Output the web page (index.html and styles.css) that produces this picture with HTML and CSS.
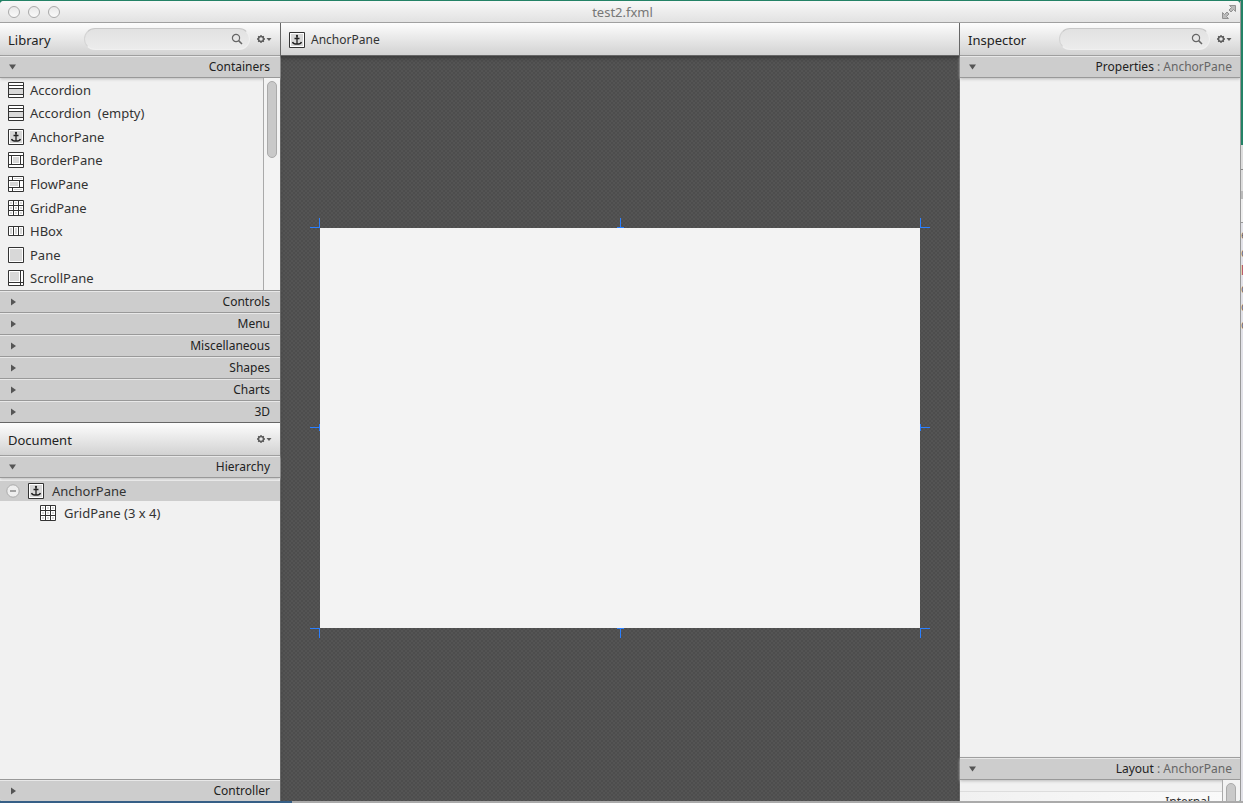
FILE: index.html
```
<!DOCTYPE html>
<html lang="en">
<head>
<meta charset="utf-8">
<title>test2.fxml</title>
<link rel="stylesheet" href="styles.css">
</head>
<body>
<svg class="defs" aria-hidden="true">
  <symbol id="accordion" viewBox="0 0 16 16"><path fill="#fff" d="M0 0h16v16H0z"/><path fill="#d8d8d8" d="M1 7h14v5H1z"/><path fill="none" stroke="#333" d="M.5 .5h15v15H.5zM0 3.500h16M0 6.500h16M0 12.500h16"/></symbol>
  <symbol id="anchor" viewBox="0 0 16 16"><path fill="#fff" stroke="#333" d="M.5 .5h15v15H.5z"/><path fill="#d8d8d8" d="M2 2h12v12H2z"/><path fill="none" stroke="#222" stroke-width="1.300" d="M8 4v8M5.500 6.500h5M3.500 10c.5 1.500 2 2.200 4.500 2.200s4-.7 4.500-2.200"/><circle cx="8" cy="3.800" r="1.100" fill="#222"/></symbol>
  <symbol id="border" viewBox="0 0 16 16"><path fill="#fff" d="M0 0h16v16H0z"/><path fill="#d8d8d8" d="M5 5h6v6H5z"/><path fill="none" stroke="#333" d="M.5 .5h15v15H.5zM0 3.500h16M0 12.500h16M3.500 3v10M12.500 3v10"/></symbol>
  <symbol id="flow" viewBox="0 0 16 16"><path fill="#fff" d="M0 0h16v16H0z"/><path fill="#d8d8d8" d="M2 6h8v4H2zM6 2h8v1H6zM6 13h8v1H6z"/><path fill="none" stroke="#333" d="M.5 .5h15v15H.5zM0 4.500h16M0 11.500h16M4.500 0v4M11.500 4v8M4.500 12v4"/></symbol>
  <symbol id="grid" viewBox="0 0 16 16"><path fill="#fff" d="M0 0h16v16H0z"/><path fill="#d8d8d8" d="M2 2h2v2H2zM7 2h2v2H7zM12 2h2v2h-2zM2 7h2v2H2zM7 7h2v2H7zM12 7h2v2h-2zM2 12h2v2H2zM7 12h2v2H7zM12 12h2v2h-2z"/><path fill="none" stroke="#333" d="M.5 .5h15v15H.5zM5.500 0v16M10.500 0v16M0 5.500h16M0 10.500h16"/></symbol>
  <symbol id="hbox" viewBox="0 0 16 16"><path fill="#fff" d="M0 3h16v10H0z"/><path fill="#d8d8d8" d="M2 5h2v6H2zM7 5h2v6H7zM12 5h2v6h-2z"/><path fill="none" stroke="#333" d="M.5 3.500h15v9H.5zM5.500 3v10M10.500 3v10"/></symbol>
  <symbol id="pane" viewBox="0 0 16 16"><path fill="#fff" stroke="#333" d="M.5 .5h15v15H.5z"/><path fill="#d8d8d8" d="M2 2h12v12H2z"/></symbol>
  <symbol id="scroll" viewBox="0 0 16 16"><path fill="#fff" d="M0 0h16v16H0z"/><path fill="#d8d8d8" d="M2 2h9v9H2z"/><path fill="none" stroke="#333" d="M.5 .5h15v15H.5zM12.500 0v16M0 12.500h16"/></symbol>
  <symbol id="search" viewBox="0 0 12 12"><circle cx="5" cy="5" r="3.600" fill="none" stroke="#666" stroke-width="1.200"/><path stroke="#666" stroke-width="1.500" d="M7.600 7.600L11 11"/></symbol>
  <symbol id="gear" viewBox="0 0 16 10"><circle cx="5" cy="5" r="2.500" fill="none" stroke="#5c5c5c" stroke-width="1.500"/><path stroke="#5c5c5c" stroke-width="1.300" d="M5 1v1.500M5 7.500V9M1 5h1.500M7.500 5H9M2.200 2.200l1 1M6.800 6.800l1 1M2.200 7.800l1-1M6.800 3.200l1-1"/><path fill="#5c5c5c" d="M10.500 4h5L13 7z"/></symbol>
  <symbol id="down" viewBox="0 0 8 6"><path fill="#555" d="M0 .5h7L3.500 5.500z"/></symbol>
  <symbol id="right" viewBox="0 0 8 8"><path fill="#555" d="M2 .5v7L7 4z"/></symbol>
</svg>
<div class="desktop">
  <main class="window">
    <header class="titlebar">
      <div class="lights"><button aria-label="Close"></button><button aria-label="Minimize"></button><button aria-label="Zoom"></button></div>
      <h1>test2.fxml</h1>
      <button class="expand" aria-label="Full screen"><svg width="16" height="16" viewBox="0 0 16 16"><path fill="#bbb" stroke="#929292" d="M8.500 1.500h6v6l-2-2-2.500 2.500-2-2 2.500-2.500zM7.500 14.500h-6v-6l2 2L6 8l2 2-2.500 2.500z"/></svg></button>
    </header>
    <div class="workspace">
      <aside class="side">
        <header class="bar"><h2>Library</h2><label class="search"><input type="text" aria-label="Search library"><svg width="12" height="12"><use href="#search"/></svg></label><button class="gear" aria-label="Library options"><svg width="16" height="10"><use href="#gear"/></svg></button></header>
        <button class="section open"><svg width="8" height="6"><use href="#down"/></svg><span>Containers</span></button>
        <div class="library">
          <ul class="items">
            <li><svg width="16" height="16"><use href="#accordion"/></svg>Accordion</li>
            <li><svg width="16" height="16"><use href="#accordion"/></svg>Accordion&nbsp; (empty)</li>
            <li><svg width="16" height="16"><use href="#anchor"/></svg>AnchorPane</li>
            <li><svg width="16" height="16"><use href="#border"/></svg>BorderPane</li>
            <li><svg width="16" height="16"><use href="#flow"/></svg>FlowPane</li>
            <li><svg width="16" height="16"><use href="#grid"/></svg>GridPane</li>
            <li><svg width="16" height="16"><use href="#hbox"/></svg>HBox</li>
            <li><svg width="16" height="16"><use href="#pane"/></svg>Pane</li>
            <li><svg width="16" height="16"><use href="#scroll"/></svg>ScrollPane</li>
          </ul>
          <div class="track"><div class="thumb"></div></div>
        </div>
        <button class="section"><svg width="8" height="8"><use href="#right"/></svg><span>Controls</span></button>
        <button class="section"><svg width="8" height="8"><use href="#right"/></svg><span>Menu</span></button>
        <button class="section"><svg width="8" height="8"><use href="#right"/></svg><span>Miscellaneous</span></button>
        <button class="section"><svg width="8" height="8"><use href="#right"/></svg><span>Shapes</span></button>
        <button class="section"><svg width="8" height="8"><use href="#right"/></svg><span>Charts</span></button>
        <button class="section last"><svg width="8" height="8"><use href="#right"/></svg><span>3D</span></button>
        <header class="bar"><h2>Document</h2><button class="gear" aria-label="Document options"><svg width="16" height="10"><use href="#gear"/></svg></button></header>
        <button class="section open"><svg width="8" height="6"><use href="#down"/></svg><span>Hierarchy</span></button>
        <ul class="tree">
          <li class="selected"><button class="collapse" aria-label="Collapse"><svg width="14" height="14" viewBox="0 0 14 14"><circle cx="7" cy="7" r="6.200" fill="#eee" stroke="#aaa"/><path stroke="#888" stroke-width="1.500" d="M4 7h6"/></svg></button><svg width="16" height="16"><use href="#anchor"/></svg>AnchorPane</li>
          <li class="child"><svg width="16" height="16"><use href="#grid"/></svg>GridPane (3 x 4)</li>
        </ul>
        <button class="section foot"><svg width="8" height="8"><use href="#right"/></svg><span>Controller</span></button>
      </aside>
      <section class="editor">
        <nav class="bar path"><svg width="16" height="16"><use href="#anchor"/></svg><a href="#root">AnchorPane</a></nav>
        <div class="canvas">
          <div class="artboard" id="root">
            <svg class="handles" width="620" height="420" viewBox="0 0 620 420"><path fill="none" stroke="#2a7fff" d="M0 9.500h10M9.500 0v10M310.500 0v10M307 9.500h7M610.500 0v10M610 9.500h10M0 209.500h10M9.500 206v7M610 209.500h10M610.500 206v7M0 410.500h10M9.500 410v10M310.500 410v10M307 410.500h7M610 410.500h10M610.500 410v10"/></svg>
          </div>
        </div>
      </section>
      <aside class="side inspector">
        <header class="bar"><h2>Inspector</h2><label class="search"><input type="text" aria-label="Search inspector"><svg width="12" height="12"><use href="#search"/></svg></label><button class="gear" aria-label="Inspector options"><svg width="16" height="10"><use href="#gear"/></svg></button></header>
        <button class="section open"><svg width="8" height="6"><use href="#down"/></svg><span>Properties <i>: AnchorPane</i></span></button>
        <div class="properties"></div>
        <button class="section open"><svg width="8" height="6"><use href="#down"/></svg><span>Layout <i>: AnchorPane</i></span></button>
        <div class="layout"><div class="fields"><div class="group">Internal</div></div><div class="track"><div class="thumb"></div></div></div>
      </aside>
    </div>
  </main>
  <div class="behind"><span>e</span><span>c</span><span class="hot">l</span><span>c</span><span>c</span><span>c</span></div>
</div>
</body>
</html>
```
FILE: styles.css
```
* { box-sizing: border-box; }
body { margin: 0; font-family: "Noto Sans", sans-serif; font-size: 13px; color: #333; }
h1, h2, ul { margin: 0; padding: 0; font-weight: 400; list-style: none; }
button { border: 0; padding: 0; background: none; font: inherit; color: inherit; }
svg { display: block; flex: none; }
.defs { position: absolute; width: 0; height: 0; }
.desktop {
  display: flex; height: 100vh; padding: 1px 0 2px; overflow: hidden;
  background:
    linear-gradient(90deg, #365f86 0 292px, #aaa 292px) bottom / 100% 2px no-repeat,
    #238266;
}
.window { flex: 1; min-width: 0; display: flex; flex-direction: column; border-radius: 4px 4px 2px 2px; overflow: hidden; background: #f1f1f1; }
.titlebar { flex: none; display: grid; grid-template-columns: 1fr auto 1fr; align-items: center; height: 22px; padding: 0 3px 0 8px; border-bottom: 1px solid #a0a0a0; background: linear-gradient(#f8f8f8, #e2e2e2); }
.titlebar h1 { font-size: 13px; line-height: 20px; color: #777; }
.lights { display: flex; gap: 8px; }
.lights button { width: 12px; height: 12px; border: 1px solid #aaa; border-radius: 50%; background: linear-gradient(#e8e8e8, #fafafa); }
.expand { justify-self: end; }
.workspace { flex: 1; min-height: 0; display: flex; }
.side { flex: none; width: 281px; display: flex; flex-direction: column; border-right: 1px solid #666; background: #f1f1f1; }
.inspector { border-right: 0; border-left: 1px solid #666; }
.bar { flex: none; display: flex; align-items: center; height: 33px; padding: 0 8px; border-bottom: 1px solid #999; background: linear-gradient(#fdfdfd, #d2d2d2); }
.bar h2 { flex: 1; padding-top: 2px; font-size: 13px; line-height: 20px; color: #222; }
.search { position: relative; width: 166px; height: 22px; margin-right: 6px; }
.inspector .search { width: 151px; }
.search input { width: 100%; height: 100%; border: 1px solid #f0f0f0; border-top-color: #c8c8c8; border-left-color: #d4d4d4; border-radius: 11px; padding: 0 26px 0 10px; background: linear-gradient(#e2e2e2, #ececec); }
.search svg { position: absolute; right: 7px; top: 5px; }
.section { flex: none; display: flex; align-items: center; justify-content: space-between; height: 22px; padding: 0 10px 0 9px; border-top: 1px solid #e8e8e8; border-bottom: 1px solid #999; background: #cdcdcd; font-size: 12px; line-height: 20px; color: #222; }
.section i { font-style: normal; color: #666; }
.inspector .section { padding-right: 8px; }
.open { box-shadow: 0 1px 3px #bbb; }
.last { border-bottom-color: #666; }
.library { flex: none; display: flex; height: 213px; border-bottom: 1px solid #999; }
.items { flex: 1; display: grid; grid-template-rows: repeat(9, 1fr); }
.items li { display: flex; align-items: center; gap: 6px; padding-left: 8px; line-height: 20px; }
.track { width: 17px; padding: 3px; border-left: 1px solid #aaa; background: #f3f3f3; }
.thumb { width: 10px; height: 77px; border: 1px solid #aaa; border-radius: 5px; background: #c9c9c9; }
.inspector .track { width: 18px; }
.tree { flex: 1; padding-top: 3px; }
.tree li { display: flex; align-items: center; height: 20px; line-height: 20px; }
.tree li > svg { margin-right: 8px; }
.tree .selected { padding-left: 6px; background: #cdcdcd; }
.collapse { margin-right: 8px; }
.tree .child { height: 24px; padding-left: 40px; }
.foot { border-bottom: 0; border-top-color: #999; box-shadow: inset 0 1px #e8e8e8; }
.editor { flex: 1; min-width: 0; display: flex; flex-direction: column; }
.path { gap: 6px; padding-top: 1px; font-size: 12px; border-bottom-color: #666; }
.path a { color: #333; text-decoration: none; }
.canvas {
  flex: 1; min-height: 0; display: flex; align-items: center; justify-content: center;
  padding-bottom: 1px;
  box-shadow: inset 0 4px 4px -2px #383838;
  background: conic-gradient(#545454 25%, #4d4d4d 0 50%, #545454 0 75%, #4d4d4d 0) 0 0 / 4px 4px;
}
.artboard { position: relative; width: 600px; height: 400px; background: #f3f3f3; }
.handles { position: absolute; left: -10px; top: -10px; }
.properties { flex: 1; border-bottom: 1px solid #999; }
.layout { flex: none; display: flex; height: 21px; overflow: hidden; }
.fields { flex: 1; padding-top: 11px; }
.group { border-top: 1px solid #ddd; padding: 0 12px; text-align: right; font-size: 12px; line-height: 20px; background: linear-gradient(90deg, #f1f1f1, #fafafa); }
.behind { flex: none; width: 3px; padding-top: 225px; overflow: hidden; border-left: 1px solid #999; font-size: 12px; color: #666; background: linear-gradient(#238266 144px, #ddd 144px 168px, #888 168px 169px, #ddd 169px 190px, #bbb 190px 198px, #eee 198px 221px, #999 221px 222px, #e2e2e8 222px); }
.behind span { display: block; height: 18px; line-height: 18px; }
.behind .hot { color: #a44; }
```
